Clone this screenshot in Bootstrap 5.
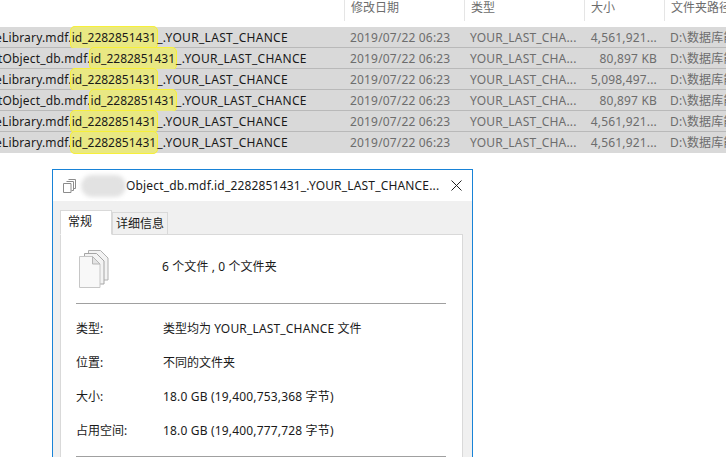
<!DOCTYPE html>
<html lang="en">
<head>
  <meta charset="UTF-8">
  <title>Properties</title>
  <link href="https://cdn.jsdelivr.net/npm/bootstrap@5.3.0/dist/css/bootstrap.min.css" rel="stylesheet">
  <style>
    html, body { height: 457px; overflow: hidden; }
    body { background: #fff; font-family: "Noto Sans", "Noto Sans CJK SC", sans-serif; font-size: 12px; color: #1a1a1a; line-height: 1; }
    .cols { display: grid; grid-template-columns: 344px 120px 120px 80px 62px; width: 726px; }
    .head-row { height: 27px; color: #6d6d6d; }
    .head-cell { height: 21px; padding-left: 6px; padding-top: 2px; border-left: 1px solid #e5e5e5; white-space: nowrap; overflow: hidden; }
    .file-row { height: 21px; background: #d9d9d9; border-bottom: 1px solid #b9b9b9; align-items: start; padding-top: 4px; letter-spacing: .17px; }
    .file-row:last-child { border-bottom: 0; }
    .file-row > div { white-space: nowrap; overflow: hidden; color: #6d6d6d; padding-left: 6px; padding-top: 1px; padding-bottom: 2px; }
    .file-row > .fname { color: #1a1a1a; padding-left: 0; overflow: visible; }
    .file-row > .fsize { text-align: right; padding-right: 7px; }
    .clip-a { margin-left: -5px; }
    .clip-b { margin-left: -2px; }
    .hit { background: #e9e883; border: 1px solid #f7f03a; border-radius: 5px; padding: 2px 1px; margin: 0 -2px; letter-spacing: 0; }
    .tail { letter-spacing: .3px; margin-left: 1px; }
    .dlg { width: 421px; height: 300px; margin: 16px 0 0 52px; border: 1px solid #1883d7; border-bottom: 0; background: #f0f0f0; }
    .dlg-title { height: 31px; background: #fff; padding: 0 10px; color: #1a1a1a; letter-spacing: .17px; }
    .smudge { width: 45px; height: 22px; border-radius: 11px; background: #e2e2e2; filter: blur(2px); margin-left: 5px; flex: none; }
    .dlg-tabs { height: 33px; padding: 8px 0 0 7px; align-items: flex-end; }
    .dtab { border: 1px solid #d9d9d9; border-bottom: 0; background: #f0f0f0; height: 22px; padding: 5px 3px 0; }
    .dtab.on { background: #fff; height: 25px; width: 52px; padding: 5px 0 0 7px; margin-bottom: -1px; position: relative; border-bottom: 1px solid #fff; }
    .dlg-panel { margin: 0 9px 0 7px; background: #fff; border: 1px solid #d9d9d9; height: 230px; padding: 0 16px 0 15px; }
    .top-part { height: 69px; padding-top: 15px; border-bottom: 1px solid #a0a0a0; }
    .top-part span { margin-left: 52px; margin-top: 11px; letter-spacing: .1px; }
    .prop { display: grid; grid-template-columns: 87px 1fr; height: 34px; align-items: center; }
    .prop .lat { letter-spacing: .17px; }
    .props { height: 153px; padding-top: 8px; border-bottom: 1px solid #a0a0a0; }
  </style>
</head>
<body>

<div class="cols head-row">
  <div></div>
  <div class="head-cell">修改日期</div>
  <div class="head-cell">类型</div>
  <div class="head-cell">大小</div>
  <div class="head-cell">文件夹路径</div>
</div>

<div class="d-flex flex-column">
  <div class="cols file-row"><div class="fname"><span class="clip-a d-inline-block">eLibrary.mdf.<span class="hit">id_2282851431</span><span class="tail">_.YOUR_LAST_CHANCE</span></span></div><div>2019/07/22 06:23</div><div>YOUR_LAST_CHA...</div><div class="fsize">4,561,921...</div><div>D:\数据库能</div></div>
  <div class="cols file-row"><div class="fname"><span class="clip-b d-inline-block">tObject_db.mdf.<span class="hit">id_2282851431</span><span class="tail">_.YOUR_LAST_CHANCE</span></span></div><div>2019/07/22 06:23</div><div>YOUR_LAST_CHA...</div><div class="fsize">80,897 KB</div><div>D:\数据库能</div></div>
  <div class="cols file-row"><div class="fname"><span class="clip-a d-inline-block">eLibrary.mdf.<span class="hit">id_2282851431</span><span class="tail">_.YOUR_LAST_CHANCE</span></span></div><div>2019/07/22 06:23</div><div>YOUR_LAST_CHA...</div><div class="fsize">5,098,497...</div><div>D:\数据库能</div></div>
  <div class="cols file-row"><div class="fname"><span class="clip-b d-inline-block">tObject_db.mdf.<span class="hit">id_2282851431</span><span class="tail">_.YOUR_LAST_CHANCE</span></span></div><div>2019/07/22 06:23</div><div>YOUR_LAST_CHA...</div><div class="fsize">80,897 KB</div><div>D:\数据库能</div></div>
  <div class="cols file-row"><div class="fname"><span class="clip-a d-inline-block">eLibrary.mdf.<span class="hit">id_2282851431</span><span class="tail">_.YOUR_LAST_CHANCE</span></span></div><div>2019/07/22 06:23</div><div>YOUR_LAST_CHA...</div><div class="fsize">4,561,921...</div><div>D:\数据库能</div></div>
  <div class="cols file-row"><div class="fname"><span class="clip-a d-inline-block">eLibrary.mdf.<span class="hit">id_2282851431</span><span class="tail">_.YOUR_LAST_CHANCE</span></span></div><div>2019/07/22 06:23</div><div>YOUR_LAST_CHA...</div><div class="fsize">4,561,921...</div><div>D:\数据库能</div></div>
</div>

<div class="dlg">
  <div class="dlg-title d-flex align-items-center">
    <svg width="13" height="14" viewBox="0 0 13 14" fill="#fff" stroke="#8c8c8c"><path d="M5.5 .5h7v9h-2"/><path d="M3.5 2.5h7v9h-2"/><path d="M.5 4.500h7.500v9H.5z"/></svg>
    <div class="smudge"></div>
    <div class="flex-grow-1 text-nowrap">Object_db.mdf.id_2282851431_.YOUR_LAST_CHANCE...</div>
    <svg width="11" height="11" viewBox="0 0 11 11" stroke="#222" fill="none"><path d="M.5.5l10 10M10.5.5l-10 10"/></svg>
  </div>
  <div class="dlg-tabs d-flex">
    <div class="dtab on">常规</div>
    <div class="dtab">详细信息</div>
  </div>
  <div class="dlg-panel">
    <div class="top-part d-flex align-items-start">
      <svg width="34" height="38" viewBox="0 0 34 38">
        <path d="M12.500 .5h12l7.500 7.500v22h-19.500z" fill="#f3f3f3" stroke="#b0b0b0"/>
        <path d="M8.500 3.500h12l7.500 7.500v23h-19.500z" fill="#f3f3f3" stroke="#a5a5a5"/>
        <path d="M3.500 6.500h13l7.500 7.500v23.500h-20.500z" fill="#f8f8f8" stroke="#c6c6c6"/>
        <path d="M16.500 6.500v7.500h7.500z" fill="#e4e4e4" stroke="#b5b5b5"/>
      </svg>
      <span>6 个文件 , 0 个文件夹</span>
    </div>
    <div class="props">
      <div class="prop"><div>类型:</div><div>类型均为 <span class="lat">YOUR_LAST_CHANCE</span> 文件</div></div>
      <div class="prop"><div>位置:</div><div>不同的文件夹</div></div>
      <div class="prop"><div>大小:</div><div class="lat">18.0 GB (19,400,753,368 字节)</div></div>
      <div class="prop"><div>占用空间:</div><div class="lat">18.0 GB (19,400,777,728 字节)</div></div>
    </div>
  </div>
</div>

<script src="https://cdn.jsdelivr.net/npm/bootstrap@5.3.0/dist/js/bootstrap.bundle.min.js"></script>
</body>
</html>
